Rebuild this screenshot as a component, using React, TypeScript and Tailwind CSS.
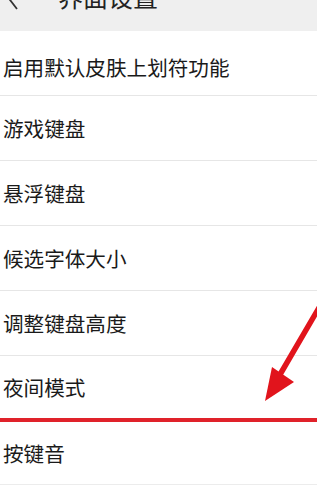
import React from 'react'

const ITEMS = ['游戏键盘', '悬浮键盘', '候选字体大小', '调整键盘高度']

export default function App() {
  return (
    <div
      className="relative w-[317px] h-[491px] overflow-hidden bg-white text-[#1a1a1a]"
      style={{ fontFamily: '"Noto Sans CJK SC", "Noto Sans", sans-serif' }}
    >
      {/* header */}
      <div className="h-[31px] bg-[#efefef] overflow-hidden">
        <div className="flex items-center h-[40px] -mt-[24px]">
          <svg width="16" height="30" viewBox="0 0 16 30" className="ml-[4px] text-[#333]">
            <path d="M13 2 L3 15 L13 28" fill="none" stroke="currentColor" strokeWidth="1.8" />
          </svg>
          <span className="ml-[38px] text-[25px] leading-none text-[#222]">界面设置</span>
        </div>
      </div>

      {/* list */}
      <div className="flex flex-col">
        <div className="h-[65px] pt-[9px] flex items-center pl-[3px] text-[20.6px] border-b border-[#e6e6e6]">
          启用默认皮肤上划符功能
        </div>
        {ITEMS.map((t) => (
          <div key={t} className="h-[65px] flex items-center pl-[3px] text-[20.6px] border-b border-[#e6e6e6]">
            {t}
          </div>
        ))}
        <div className="h-[66px] flex items-center pl-[3px] text-[20.6px] border-b-[4px] border-[#e0222a]">
          夜间模式
        </div>
        <div className="h-[63px] flex items-center pl-[3px] text-[20.6px] border-b border-[#ececec]">
          按键音
        </div>
        <div className="flex-1 bg-[#fdfdf6]" />
      </div>

      {/* annotation arrow */}
      <svg className="absolute left-0 top-0 pointer-events-none" width="317" height="491" viewBox="0 0 317 491">
        <line x1="320" y1="306" x2="278" y2="378" stroke="#e1141c" strokeWidth="5.5" strokeLinecap="round" />
        <polygon points="265,401 272,367 294,382" fill="#e1141c" />
      </svg>
    </div>
  )
}
